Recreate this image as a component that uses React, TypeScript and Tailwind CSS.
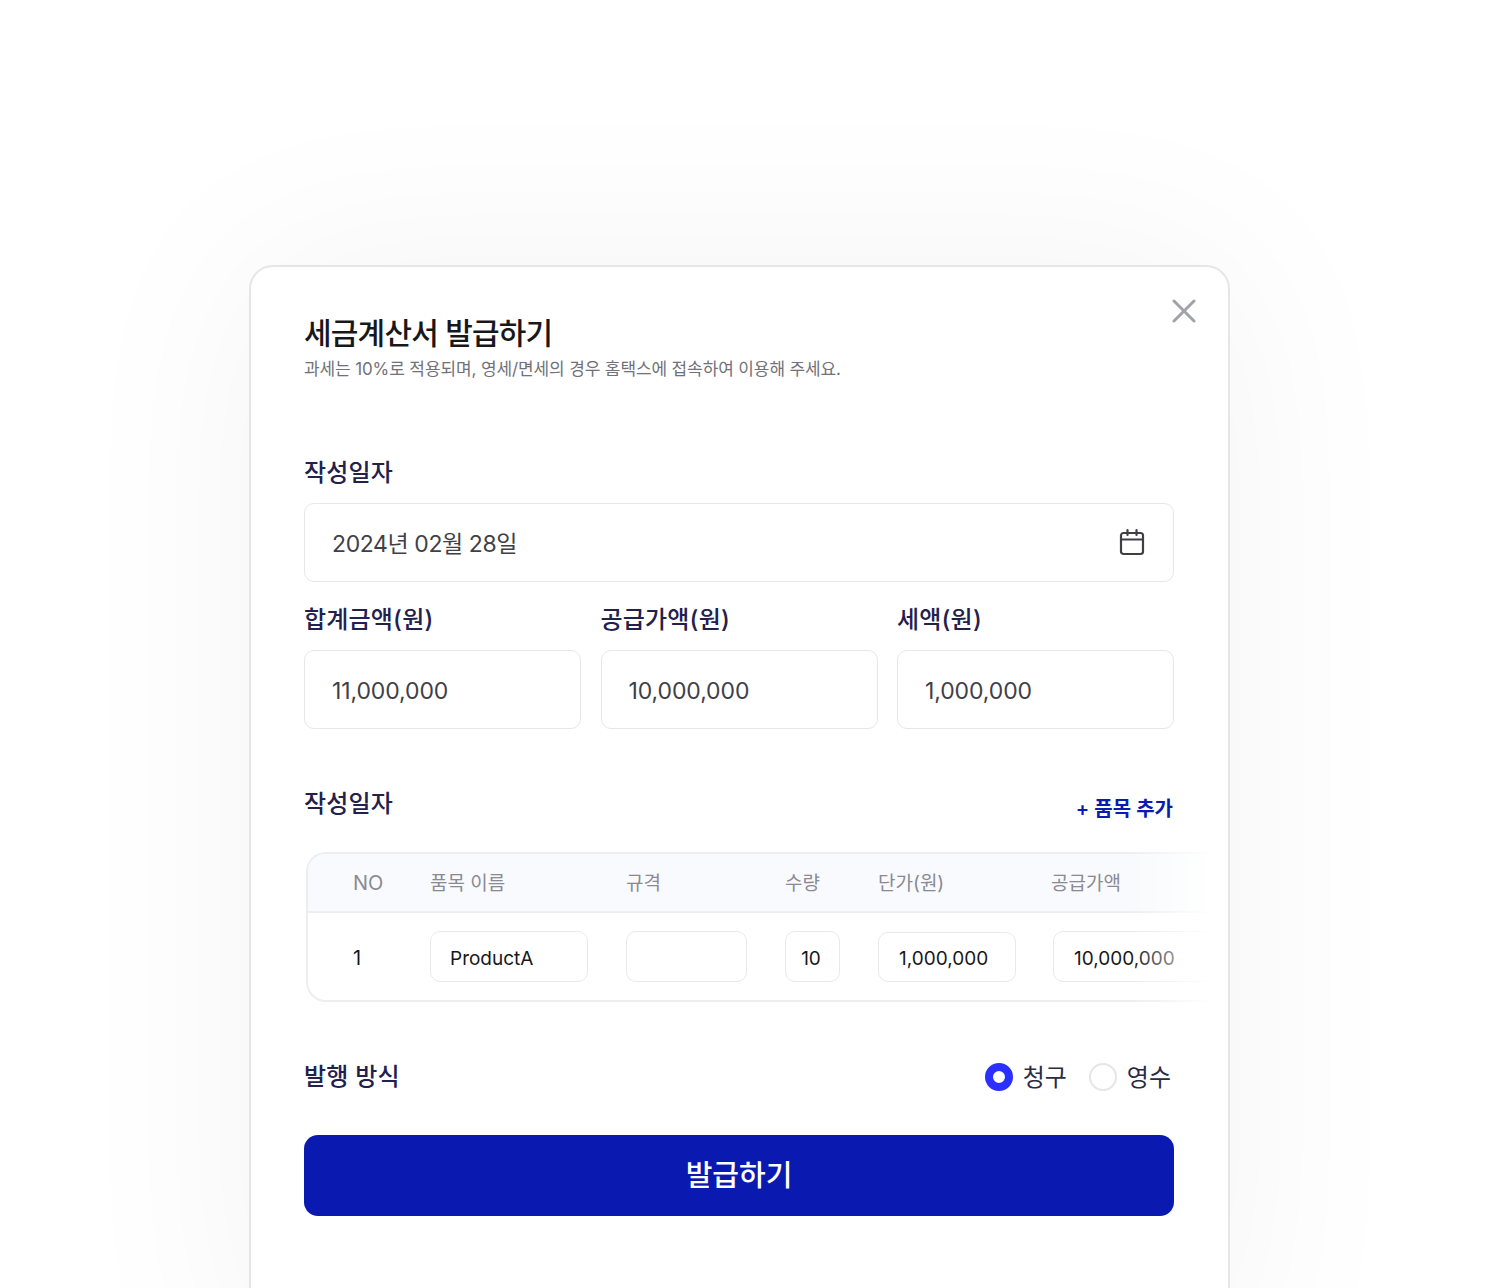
import React from 'react';

const FONT = "font-['Inter','Noto_Sans_CJK_KR',sans-serif]";

function Field({ value, className = '' }: { value: string; className?: string }) {
  return (
    <div className={`h-[79px] flex items-center px-[27px] pt-1 rounded-[10px] border-[1.5px] border-[#e7e7ea] bg-white text-[23px] text-[#3f3f46] ${className}`}>
      {value}
    </div>
  );
}

function Label({ children }: { children: React.ReactNode }) {
  return <div className="h-8 leading-8 pt-px text-[24px] tracking-[0.2px] font-medium text-[#22204d]">{children}</div>;
}

function CellInput({ value, className }: { value?: string; className: string }) {
  return (
    <div className={`${className} shrink-0 flex items-center rounded-[10px] border-[1.5px] border-[#e9e9ec] bg-white pl-5 pt-[5px] text-[19px] text-[#18181b]`}>
      {value}
    </div>
  );
}

export default function App() {
  return (
    <div className={`h-[1288px] overflow-hidden bg-white pl-[249px] pt-[265px] ${FONT}`}>
      <div className="relative w-[981px] h-[1100px] rounded-[24px] border-2 border-[#e6e6e8] bg-white pl-[53px] pr-[54px] pt-[45px] shadow-[0_0_200px_rgba(0,0,0,0.05)]">
        {/* Close */}
        <svg className="absolute top-[32px] right-[32px] w-6 h-6" viewBox="0 0 24 24" fill="none" stroke="#a1a1ae" strokeWidth="3" strokeLinecap="round">
          <path d="M2 2 L22 22 M22 2 L2 22" />
        </svg>

        {/* Header */}
        <h1 className="h-10 leading-10 pt-px text-[30px] font-medium tracking-[-0.8px] text-[#18181b] whitespace-nowrap">세금계산서 발급하기</h1>
        <p className="mt-[5px] h-6 leading-6 text-[17px] tracking-[-0.12px] text-[#71717a] whitespace-nowrap">
          과세는 10%로 적용되며, 영세/면세의 경우 홈택스에 접속하여 이용해 주세요.
        </p>

        {/* Date */}
        <div className="mt-[75px]">
          <Label>작성일자</Label>
        </div>
        <div className="relative mt-[15px]">
          <Field value="2024년 02월 28일" className="tracking-[-0.4px]" />
          <svg className="absolute top-[25px] right-[29px] w-[26px] h-[28px]" viewBox="0 0 26 28" fill="none" stroke="#3f3f46" strokeWidth="2.2" strokeLinecap="round" strokeLinejoin="round">
            <rect x="2" y="5" width="22" height="21" rx="2.5" />
            <path d="M2 11.5 H24 M8.5 2 V7 M17.5 2 V7" />
          </svg>
        </div>

        {/* Amounts */}
        <div className="mt-[21px] grid grid-cols-3 gap-x-[19.5px]">
          {[
            ['합계금액(원)', '11,000,000'],
            ['공급가액(원)', '10,000,000'],
            ['세액(원)', '1,000,000'],
          ].map(([label, value]) => (
            <div key={label}>
              <Label>{label}</Label>
              <div className="mt-[15px]">
                <Field value={value} className="tracking-[-0.1px]" />
              </div>
            </div>
          ))}
        </div>

        {/* Items */}
        <div className="mt-[58px] h-8 flex items-start justify-between">
          <Label>작성일자</Label>
          <span className="mt-[6px] mr-[1px] h-8 leading-8 text-[20px] font-semibold text-[#0b1bb0]">+ 품목 추가</span>
        </div>

        <div className="relative mt-[33px] ml-[2px] w-[915px] h-[150px] rounded-l-[20px] border-2 border-r-0 border-[#eeeef0] overflow-hidden">
          <div className="h-[59px] flex items-center gap-[38px] pl-[45px] pt-1 bg-[#f8fafd] border-b-2 border-[#eeeef0] text-[19px] text-[#8a8a94]">
            <span className="w-[39px] shrink-0 -mt-1 text-[20px]">NO</span>
            <span className="w-[158px] shrink-0">품목 이름</span>
            <span className="w-[121px] shrink-0">규격</span>
            <span className="w-[55px] shrink-0">수량</span>
            <span className="w-[135px] shrink-0">단가(원)</span>
            <span>공급가액</span>
          </div>
          <div className="h-[87px] flex items-center gap-[38px] pl-[45px] text-[19px] text-[#18181b]">
            <span className="w-[39px] shrink-0 pt-[2px] text-[20px]">1</span>
            <CellInput value="ProductA" className="w-[158px] h-[51px] !pl-[19px]" />
            <CellInput className="w-[121px] h-[51px]" />
            <div className="w-[55px] h-[51px] shrink-0 flex items-center justify-center rounded-[10px] border-[1.5px] border-[#e9e9ec] pt-[5px] pr-[3px]">10</div>
            <CellInput value="1,000,000" className="w-[138px] h-[50px]" />
            <CellInput value="10,000,000" className="-ml-px w-[160px] h-[51px]" />
          </div>
        </div>
        {/* Right edge fade */}
        <div className="absolute top-[585px] h-[152px] left-[880px] w-[96px] bg-gradient-to-r from-white/0 to-white to-85%" />

        {/* Type */}
        <div className="mt-[58px] h-8 flex items-center justify-between">
          <Label>발행 방식</Label>
          <div className="mt-[2px] flex items-center mr-[3px] leading-8 text-[24px] text-[#2b2b45]">
            <span className="w-7 h-7 rounded-full border-[8px] border-[#2b2fff] bg-white" />
            <span className="ml-[10px] pt-[2px]">청구</span>
            <span className="ml-[22px] w-7 h-7 rounded-full border-2 border-[#e6e6e8] bg-white" />
            <span className="ml-[10px] pt-[2px]">영수</span>
          </div>
        </div>

        <button className="mt-[43px] w-full h-[81px] rounded-[14px] bg-[#0a1ab0] text-white text-[29px] font-medium">
          발급하기
        </button>
      </div>
    </div>
  );
}
